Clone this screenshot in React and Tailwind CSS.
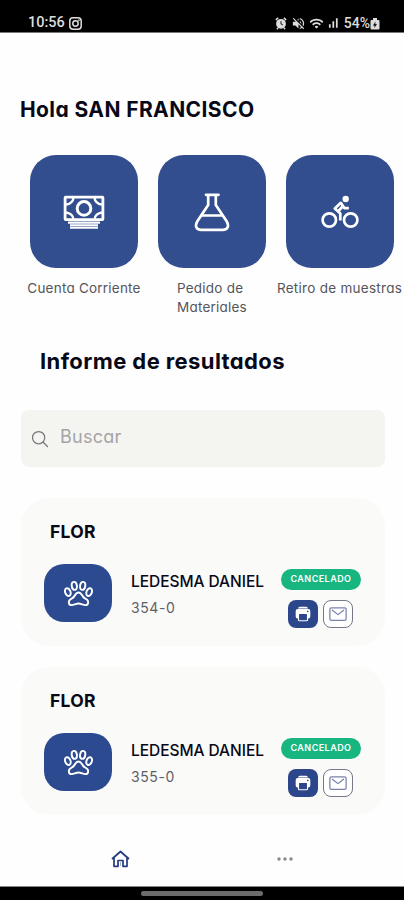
import { IoPawOutline, IoPrint, IoMailOutline, IoSearchOutline } from "react-icons/io5";
import { MdVolumeOff, MdWifi, MdSignalCellularAlt } from "react-icons/md";

function AlarmIcon() {
  return (
    <svg width="12" height="13" viewBox="0 0 12 13" fill="none" stroke="currentColor">
      <path d="M0.800 2.800L3.200 0.900M11.200 2.800L8.800 0.900M2 12.300L3 11M10 12.300L9 11" strokeWidth="1.600" />
      <circle cx="6" cy="6.800" r="4.900" fill="currentColor" stroke="none" />
      <path d="M6 4.200V7L7.900 8" stroke="#000" strokeWidth="0.900" />
    </svg>
  );
}

function CashIcon() {
  return (
    <svg width="42" height="34" viewBox="0 0 42 34" fill="none" stroke="#fff" strokeWidth="2.8">
      <rect x="2.1" y="2.1" width="37.8" height="22.5" rx="0.6" />
      <path d="M10.5 2.5C10.5 6 7 9.500 2.500 9.500M31.500 2.500C31.500 6 35 9.500 39.500 9.500M10.500 24.500C10.500 21 7 17.500 2.500 17.500M31.500 24.500C31.500 21 35 17.500 39.500 17.500" strokeWidth="2.4" />
      <circle cx="21" cy="13.400" r="6.800" strokeWidth="3" />
      <path d="M5 27.600H37M7 30.200H35M7 32.700H35" strokeWidth="2.100" />
    </svg>
  );
}

function FlaskIcon() {
  return (
    <svg width="36" height="40" viewBox="0 0 36 40" fill="none" stroke="#fff" strokeWidth="2.700" strokeLinejoin="round" strokeLinecap="round">
      <path d="M12 2.800H24.500M14.200 2.800V13L3.500 29C0.500 34 2.300 37.800 7 37.800H29C33.700 37.800 35.500 34 32.500 29L21.800 13V2.800" />
      <path d="M8 23.500H28" />
    </svg>
  );
}

function BikeIcon() {
  return (
    <svg width="38" height="34" viewBox="0 0 38 34" fill="none" stroke="#fff" strokeWidth="2.700" strokeLinejoin="round">
      <circle cx="8.300" cy="25" r="6.700" />
      <circle cx="29.700" cy="25" r="6.700" />
      <circle cx="24.700" cy="4" r="3.200" fill="#fff" stroke="none" />
      <path d="M27.800 13.200H23.500L19.800 7.800L13.800 13.500L19.300 18.500V25.500" />
      <path d="M17.500 16L22 11" />
    </svg>
  );
}

function HomeIcon() {
  return (
    <svg width="19" height="18" viewBox="0 0 19 18" fill="none" stroke="#24397f" strokeWidth="1.700" strokeLinejoin="round">
      <path d="M1 9L9.500 1.500L18 9M3 8V16.300H7V10.500H12V16.300H16V8" />
      <path d="M9.500 12V16" strokeWidth="1" strokeOpacity="0.400" />
    </svg>
  );
}

function Tile({ children }) {
  return (
    <div className="flex h-[113px] w-[108px] items-center justify-center rounded-[26px] bg-[#324e8e]">
      {children}
    </div>
  );
}

function ResultCard({ number }) {
  return (
    <article className="h-[148px] rounded-[28px] bg-[#fafaf8] pt-[22px] pl-[23px]">
      <h3 className="pl-[6px] text-[17.5px] leading-6 font-bold tracking-[0.3px]">FLOR</h3>
      <div className="mt-5 flex">
        <div className="flex h-[58px] w-[68px] shrink-0 items-center justify-center rounded-[20px] bg-[#2c4a90] text-white">
          <IoPawOutline size={31} />
        </div>
        <div className="ml-[19px] w-[150px] shrink-0 pt-[5px]">
          <p className="text-[15.5px] leading-[26px] font-medium tracking-[-0.05px] whitespace-nowrap">LEDESMA DANIEL</p>
          <p className="text-[14px] leading-[25px] tracking-[0.6px] text-[#606067]">{number}</p>
        </div>
        <div className="flex w-[80px] flex-col items-center pt-[5px]">
          <span className="flex h-[21px] w-[80px] items-center justify-center rounded-full bg-[#17b681] pb-px text-[9px] font-semibold tracking-[0.45px] text-white">CANCELADO</span>
          <div className="mt-[10px] mr-[2px] flex gap-[5px]">
            <span className="flex h-[28px] w-[30px] items-center justify-center rounded-[8px] bg-[#2b468b] text-white"><IoPrint size={18} /></span>
            <span className="flex h-[28px] w-[30px] items-center justify-center rounded-[8px] border border-[#77778a] bg-white text-[#7881ac]"><IoMailOutline size={20} /></span>
          </div>
        </div>
      </div>
    </article>
  );
}

export default function App() {
  return (
    <div className="flex h-[900px] w-[404px] flex-col overflow-hidden bg-[#fefefe] font-['Inter',sans-serif] text-[#080817] [font-feature-settings:'cv11']">
      <header className="flex h-[33px] shrink-0 items-end justify-between border-b border-[#777] bg-black pr-[24px] pl-[28px] font-['Roboto',sans-serif] text-[#ddd]">
        <div className="flex h-[18px] items-center gap-[4px]">
          <span className="text-[14.500px] font-medium">10:56</span>
          <svg width="13" height="13" viewBox="0 0 13 13" fill="none" stroke="currentColor" strokeWidth="1.500">
            <rect x="0.800" y="0.800" width="11.400" height="11.400" rx="3.200" />
            <circle cx="6.500" cy="6.500" r="2.700" />
            <circle cx="9.800" cy="3.200" r="0.300" />
          </svg>
        </div>
        <div className="flex h-[18px] items-center">
          <AlarmIcon />
          <MdVolumeOff className="ml-[4px]" size={15} />
          <MdWifi className="ml-[3px]" size={15} />
          <MdSignalCellularAlt className="ml-[2px]" size={14} />
          <span className="ml-[4px] text-[14px] font-medium">54%</span>
          <svg width="10" height="13" viewBox="0 0 10 13">
            <path d="M3 1h4v2h1.500q1 0 1 1v7.500q0 1-1 1h-7q-1 0-1-1V4q0-1 1-1H3z" fill="currentColor" />
            <path d="M5.500 4.500L3 8.500h1.700L4.200 11 7 7.300H5.200z" fill="#000" />
          </svg>
        </div>
      </header>

      <main className="flex-1 pl-px">
        <h1 className="mt-[63px] ml-[19px] text-[21px] leading-7 font-bold tracking-[0.4px] whitespace-nowrap">Hola SAN FRANCISCO</h1>
        <section className="mt-[31px] ml-[19px] flex text-[13.5px] leading-[19px] tracking-[0.22px] text-[#55555a]">
          <div className="flex w-[128px] flex-col items-center">
            <Tile><CashIcon /></Tile>
            <p className="mt-[11px] whitespace-nowrap">Cuenta Corriente</p>
          </div>
          <div className="flex w-[128px] flex-col items-center">
            <Tile><FlaskIcon /></Tile>
            <p className="mt-[11px] w-[70px] whitespace-nowrap">Pedido de<br />Materiales</p>
          </div>
          <div className="flex w-[127px] flex-col items-center">
            <Tile><BikeIcon /></Tile>
            <p className="mt-[11px] tracking-[0.28px] whitespace-nowrap">Retiro de muestras</p>
          </div>
        </section>
        <h2 className="mt-[28px] ml-[39px] text-[22px] leading-8 font-bold tracking-[0.4px] whitespace-nowrap">Informe de resultados</h2>
        <div className="ml-5 mt-[33px] flex h-[57px] w-[364px] items-center rounded-[8px] bg-[#f4f5f1] pl-[9px]">
          <IoSearchOutline size={20} className="text-[#77777b]" />
          <span className="ml-[10px] pb-[4px] text-[18px] tracking-[0.25px] text-[#a4a4a7]">Buscar</span>
        </div>
        <div className="ml-5 mt-[31px] flex w-[364px] flex-col gap-[21px]">
          <ResultCard number="354-0" />
          <ResultCard number="355-0" />
        </div>
      </main>

      <nav className="flex h-[54px] shrink-0 items-center justify-between pr-[110px] pl-[111px]">
        <HomeIcon />
        <svg width="18" height="6" viewBox="0 0 18 6" fill="#88888d">
          <circle cx="3" cy="3" r="1.700" /><circle cx="9" cy="3" r="1.700" /><circle cx="15" cy="3" r="1.700" />
        </svg>
      </nav>
      <footer className="flex h-[14px] shrink-0 justify-center border-t border-[#888] bg-black pt-[4px]">
        <span className="h-[5px] w-[122px] rounded-full bg-[#6c6c6c]" />
      </footer>
    </div>
  );
}
